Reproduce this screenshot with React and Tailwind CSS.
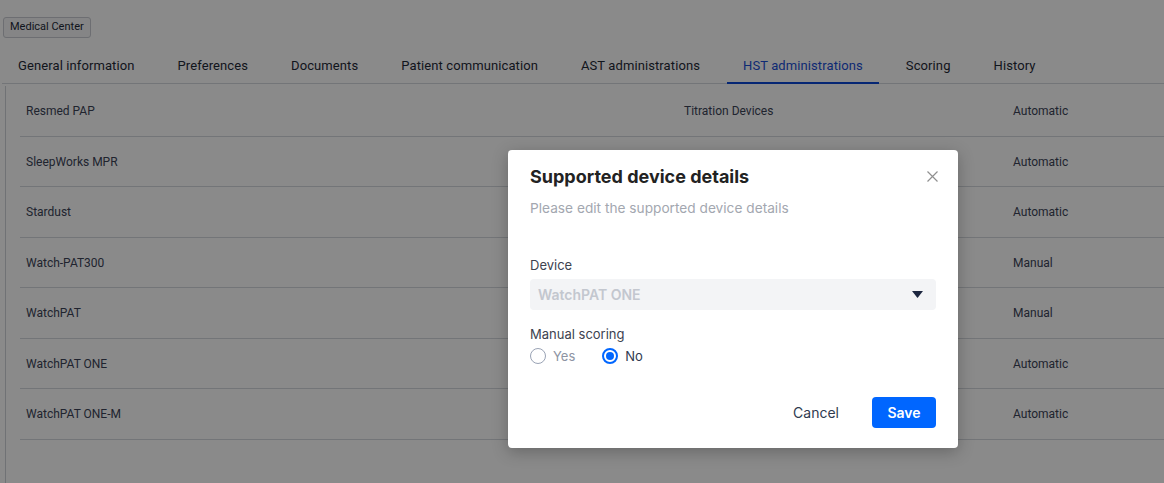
const tabs = [
  "General information",
  "Preferences",
  "Documents",
  "Patient communication",
  "AST administrations",
  "HST administrations",
  "Scoring",
  "History",
];

const rows = [
  { name: "Resmed PAP", type: "Titration Devices", scoring: "Automatic" },
  { name: "SleepWorks MPR", type: "", scoring: "Automatic" },
  { name: "Stardust", type: "", scoring: "Automatic" },
  { name: "Watch-PAT300", type: "", scoring: "Manual" },
  { name: "WatchPAT", type: "", scoring: "Manual" },
  { name: "WatchPAT ONE", type: "", scoring: "Automatic" },
  { name: "WatchPAT ONE-M", type: "", scoring: "Automatic" },
];

function Radio({ checked, label }) {
  return (
    <label className="flex items-center gap-[7px]">
      {checked ? (
        <span className="w-4 h-4 rounded-full border-2 border-[#0066ff] flex items-center justify-center">
          <span className="w-2 h-2 rounded-full bg-[#0066ff]" />
        </span>
      ) : (
        <span className="w-4 h-4 rounded-full border border-[#9aa3b5]" />
      )}
      <span className={checked ? "text-[#2f3a4f]" : "text-[#8d94a3]"}>{label}</span>
    </label>
  );
}

export default function App() {
  return (
    <div className="relative w-[1164px] h-[483px] overflow-hidden bg-white font-['Roboto',sans-serif]">
      {/* Page */}
      <div className="pt-[13px] pl-[3px]">
        <span className="inline-flex items-center h-[21px] border border-[#c9ccd2] rounded-[3px] px-[6px] text-[11px] text-[#1f2937] bg-[#f5f6f8]">
          Medical Center
        </span>
      </div>

      <div className="mt-[15px] ml-[2px] flex border-b border-[#d5d8de] text-[13px] tracking-[0.1px] text-[#1f2937]">
        {tabs.map((t) => (
          <div
            key={t}
            className={
              t === "HST administrations"
                ? "px-[16px] pb-[7px] pt-[3px] mr-[11px] border-b-2 border-[#0a47d6] text-[#1a4fd6] -mb-px"
                : "px-[16px] pb-[8px] pt-[3px] mr-[11px]"
            }
          >
            {t}
          </div>
        ))}
      </div>

      <div className="ml-[5px] mt-[2px] border-l border-[#cfd2d8] h-[400px]">
        {rows.map((r) => (
          <div
            key={r.name}
            className="ml-[14px] h-[50.5px] border-b border-[#d5d8de] flex items-center text-[12px] text-[#3b4457]"
          >
            <div className="w-[664px] pl-[6px]">{r.name}</div>
            <div className="w-[329px]">{r.type}</div>
            <div>{r.scoring}</div>
          </div>
        ))}
      </div>

      {/* Overlay */}
      <div className="absolute inset-0 bg-black/[0.46]" />

      {/* Modal */}
      <div className="absolute left-[508px] top-[150px] w-[450px] h-[298px] bg-white rounded-[4px] shadow-[0_4px_16px_rgba(0,0,0,0.25)] px-[22px] pt-[13px] font-['Inter',sans-serif]">
        <div className="flex items-center justify-between">
          <h2 className="text-[18px] font-bold text-[#222]">Supported device details</h2>
          <svg width="11" height="11" viewBox="0 0 11 11" className="-mr-[2px]">
            <path d="M0.5 0.5L10.5 10.5M10.5 0.5L0.5 10.5" stroke="#909090" strokeWidth="1.2" />
          </svg>
        </div>
        <p className="mt-[8px] text-[13.7px] text-[#a3a7b0]">Please edit the supported device details</p>

        <div className="mt-[37px] text-[13px] text-[#3d4350]">Device</div>
        <div className="mt-[4px] h-[31px] bg-[#f3f4f6] rounded-[4px] flex items-center justify-between pl-[8px] pr-[13px]">
          <span className="text-[14px] font-semibold text-[#c3c7cf]">WatchPAT ONE</span>
          <svg width="11" height="7" viewBox="0 0 11 7">
            <path d="M0 0H11L5.5 7Z" fill="#1d2740" />
          </svg>
        </div>

        <div className="mt-[15px] text-[13px] text-[#3d4350]">Manual scoring</div>
        <div className="mt-[2px] flex gap-[27px] text-[13px]">
          <Radio label="Yes" />
          <Radio checked label="No" />
        </div>

        <div className="mt-[31px] flex items-center justify-end gap-[33px]">
          <button className="text-[14px] text-[#2f3a4f]">Cancel</button>
          <button className="w-[64px] h-[31px] bg-[#0066ff] rounded-[4px] text-white text-[14px] font-semibold">
            Save
          </button>
        </div>
      </div>
    </div>
  );
}
